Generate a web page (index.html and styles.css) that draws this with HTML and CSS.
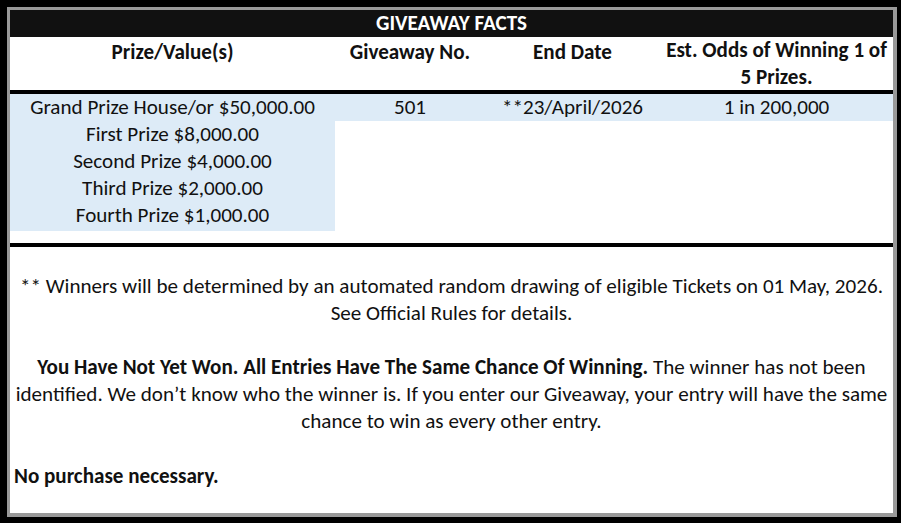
FILE: index.html
```html
<!DOCTYPE html>
<html>
<head>
<meta charset="utf-8">
<link rel="stylesheet" href="styles.css">
</head>
<body>
<div class="frame">
  <div class="sheet">
    <div class="title">GIVEAWAY FACTS</div>
    <div class="cols head">
      <div class="cell">Prize/Value(s)</div>
      <div class="cell">Giveaway No.</div>
      <div class="cell">End Date</div>
      <div class="cell">Est. Odds of Winning 1 of<br>5 Prizes.</div>
    </div>
    <div class="rule"></div>
    <div class="cols body">
      <div class="prizes">
        <div class="line">Grand Prize House/or $50,000.00</div>
        <div class="line">First Prize $8,000.00</div>
        <div class="line">Second Prize $4,000.00</div>
        <div class="line">Third Prize $2,000.00</div>
        <div class="line">Fourth Prize $1,000.00</div>
      </div>
      <div class="line blue">501</div>
      <div class="line blue">**23/April/2026</div>
      <div class="line blue">1 in 200,000</div>
    </div>
    <div class="rule thick"></div>
    <div class="notes">
      <p class="center">** Winners will be determined by an automated random drawing of eligible Tickets on 01 May, 2026.<br>See Official Rules for details.</p>
      <p class="center"><b>You Have Not Yet Won. All Entries Have The Same Chance Of Winning.</b> The winner has not been<br>identified. We don’t know who the winner is. If you enter our Giveaway, your entry will have the same<br>chance to win as every other entry.</p>
      <p class="left"><b>No purchase necessary.</b></p>
    </div>
  </div>
</div>
</body>
</html>
```
FILE: styles.css
```css
html, body {
  margin: 0;
  padding: 0;
  background: #fff;
}
body {
  font-family: Calibri, Carlito, Lato, "Liberation Sans", sans-serif;
  font-size: 21.1px;
  color: #111;
}
.frame {
  width: 890px;
  height: 510px;
  border-style: solid;
  border-color: #000;
  border-width: 7px 4px 6px 7px;
  background: #000;
}
.sheet {
  box-sizing: border-box;
  width: 100%;
  height: 100%;
  border: 3px solid #999;
  border-width: 3px 4px 4px 3px;
  background: #fff;
  display: flex;
  flex-direction: column;
  overflow: hidden;
}
.sheet > * {
  flex-shrink: 0;
}
.title {
  background: #111;
  color: #fff;
  font-weight: bold;
  text-align: center;
  height: 27px;
  line-height: 27px;
}
.cols {
  display: grid;
  grid-template-columns: 325px 150px 175px 233px;
}
.head {
  height: 53px;
  font-weight: bold;
  line-height: 27px;
}
.head .cell {
  text-align: center;
  white-space: nowrap;
}
.head .cell:not(:last-child) {
  padding-top: 2px;
}
.rule {
  height: 4px;
  background: #000;
}
.rule.thick {
  margin-top: 12px;
}
.body {
  align-items: start;
}
.prizes {
  background: #ddebf7;
  padding-bottom: 2px;
}
.line {
  height: 27px;
  line-height: 27px;
  text-align: center;
  white-space: nowrap;
}
.blue {
  background: #ddebf7;
}
.notes {
  padding: 26px 4px 0;
  line-height: 27px;
  white-space: nowrap;
}
.notes p {
  margin: 0 0 27px;
}
.notes p.left {
  margin: 28px 0 0;
}
.center {
  text-align: center;
}
.left {
  text-align: left;
}
```
